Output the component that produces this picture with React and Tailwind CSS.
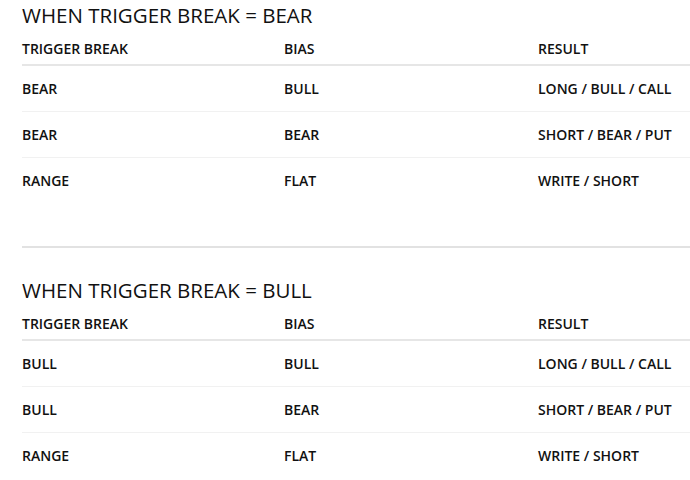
import React from 'react';

const SECTIONS = [
  {
    title: 'WHEN TRIGGER BREAK = BEAR',
    rows: [
      ['BEAR', 'BULL', 'LONG / BULL / CALL'],
      ['BEAR', 'BEAR', 'SHORT / BEAR / PUT'],
      ['RANGE', 'FLAT', 'WRITE / SHORT'],
    ],
  },
  {
    title: 'WHEN TRIGGER BREAK = BULL',
    rows: [
      ['BULL', 'BULL', 'LONG / BULL / CALL'],
      ['BULL', 'BEAR', 'SHORT / BEAR / PUT'],
      ['RANGE', 'FLAT', 'WRITE / SHORT'],
    ],
  },
];

const COLS = 'grid grid-cols-[262px_254px_1fr]';

function Section({ title, rows }) {
  return (
    <section>
      <h2 className="text-[20.5px] leading-[30px] font-normal">{title}</h2>
      <div className={`${COLS} h-[36px] pt-[9px] border-b-2 border-[#e6e6e6] text-[14px] leading-[20px] font-semibold`}>
        <div>TRIGGER BREAK</div>
        <div>BIAS</div>
        <div>RESULT</div>
      </div>
      {rows.map((r, i) => (
        <div
          key={i}
          className={`${COLS} h-[46px] items-center text-[14px] leading-[20px] font-semibold border-b ${
            i < rows.length - 1 ? 'border-[#f1f1f1]' : 'border-transparent'
          }`}
        >
          {r.map((c, j) => (
            <div key={j}>{c}</div>
          ))}
        </div>
      ))}
    </section>
  );
}

export default function App() {
  return (
    <div className="min-h-[480px] bg-white pl-[22px] text-[#111] font-['Open_Sans',sans-serif]">
      <Section {...SECTIONS[0]} />
      <hr className="mt-[42px] mb-[27px] border-0 border-t-2 border-[#e2e2e2]" />
      <Section {...SECTIONS[1]} />
    </div>
  );
}
